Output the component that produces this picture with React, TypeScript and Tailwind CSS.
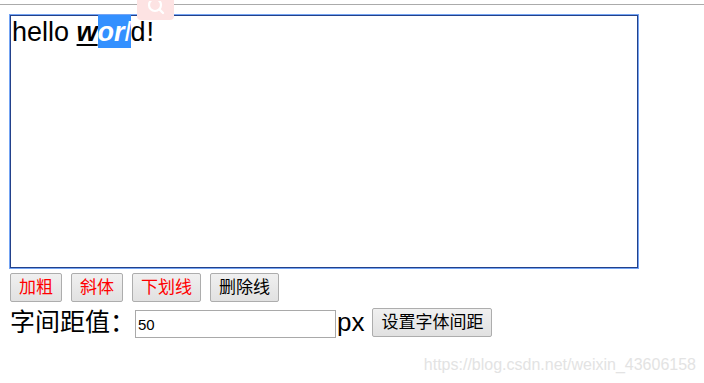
import React from "react";

const cjk = { fontFamily: '"Liberation Sans", "Noto Sans CJK SC", sans-serif' };

function Btn({ children, red }: { children: React.ReactNode; red?: boolean }) {
  return (
    <button
      className={
        "h-[29px] px-[8px] border border-[#adadad] bg-gradient-to-b from-[#f0f0f0] to-[#e1e1e1] text-[17px] leading-none rounded-[2px]" +
        (red ? " text-[#ff0000]" : " text-black")
      }
      style={cjk}
    >
      {children}
    </button>
  );
}

export default function App() {
  return (
    <div className="relative w-[704px] h-[383px] bg-white overflow-hidden" style={cjk}>
      <div className="h-[4px]" />
      <div className="h-px bg-[#ababab]" />
      <div className="absolute left-[137px] top-0 w-[37px] h-[20px] rounded-b-[4px] bg-[#fde3e3] flex items-center justify-center">
        <svg width="22" height="18" viewBox="0 0 22 18">
          <circle cx="10" cy="4" r="6" fill="none" stroke="#ffffff" strokeWidth="2.2" />
          <line x1="14.5" y1="8.5" x2="18" y2="12" stroke="#ffffff" strokeWidth="2.4" strokeLinecap="round" />
        </svg>
      </div>
      <div className="pl-[10px] pt-[10px]">
        <div className="w-[628px] h-[253px] border border-[#23418a] shadow-[0_0_0_1px_#74a4f4] pl-[1px] pt-[1px]">
          <div className="text-[27px] leading-[31px] text-black" style={{ fontFamily: '"Liberation Sans", sans-serif' }}>
            hello{" "}
            <u className="underline decoration-[2px] underline-offset-[3px]">
              <i>
                <b>w</b>
                <span className="bg-[#3390ff] text-white inline-block h-[33px] -mt-[2px] align-top pt-[2px]">
                  <b>or</b>l
                </span>
              </i>
            </u>
            <span className="tracking-[1px]">d!</span>
          </div>
        </div>
        <div className="flex gap-[9px] mt-[5px]">
          <Btn red>加粗</Btn>
          <Btn red>斜体</Btn>
          <Btn red>下划线</Btn>
          <Btn>删除线</Btn>
        </div>
        <div className="flex items-center mt-[3px] h-[34px]">
          <span className="text-[25px] text-black leading-none">字间距值：</span>
          <input
            defaultValue="50"
            className="mt-[4px] w-[201px] h-[28px] border border-[#a9a9a9] px-[2px] text-[15px] text-black outline-none"
            style={{ fontFamily: '"Liberation Sans", sans-serif' }}
          />
          <span className="text-[26px] leading-none text-black ml-[1px]" style={{ fontFamily: '"Liberation Sans", sans-serif' }}>px</span>
          <div className="ml-[8px]">
            <Btn>设置字体间距</Btn>
          </div>
        </div>
      </div>
      <div className="absolute right-[8px] bottom-[6px] text-[16px] text-[#e3e3e3]" style={{ fontFamily: '"Liberation Sans", sans-serif' }}>
        https://blog.csdn.net/weixin_43606158
      </div>
    </div>
  );
}
